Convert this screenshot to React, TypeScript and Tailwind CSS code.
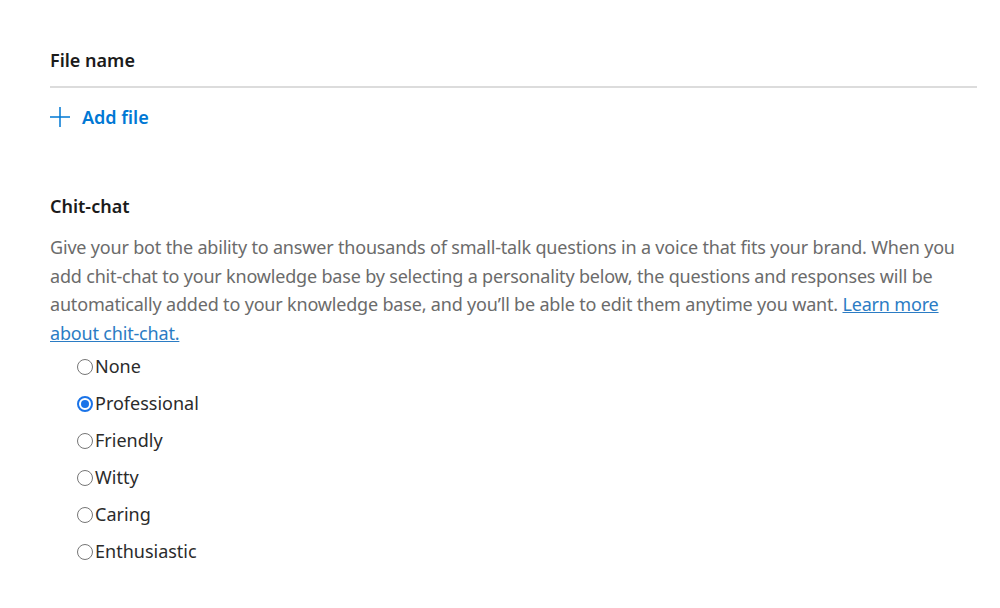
import { useState } from 'react';

const options = ['None', 'Professional', 'Friendly', 'Witty', 'Caring', 'Enthusiastic'];

export default function App() {
    const [selected, setSelected] = useState('Professional');

    return (
        <div className="min-h-screen bg-white font-['Noto_Sans',sans-serif] text-[#323130]">
            <div className="pl-[50px] pr-[23px] pt-[46px]">
                <h2 className="text-[18px] font-semibold leading-[28px] text-[#1b1b1b]">File name</h2>
                <div className="mt-[12px] h-[2px] bg-[#dcdcdc]" />
                <button className="mt-[15px] flex items-center gap-[12px] text-[#0078d4]">
                    <svg width="20" height="20" viewBox="0 0 20 20" fill="none" stroke="currentColor" strokeWidth="1.5">
                        <path d="M10 0v20M0 10h20" />
                    </svg>
                    <span className="text-[18px] font-semibold leading-[28px]">Add file</span>
                </button>

                <h2 className="mt-[61px] text-[18px] font-semibold leading-[28px] text-[#1b1b1b]">Chit-chat</h2>
                <p className="mt-[13px] text-[18px] leading-[28.5px] tracking-[-0.18px] text-[#6b6b6b]">
                    Give your bot the ability to answer thousands of small-talk questions in a voice that fits your brand. When you add chit-chat to your knowledge base by selecting a personality below, the questions and responses will be automatically added to your knowledge base, and you’ll be able to edit them anytime you want.{' '}
                    <a href="#" className="text-[#2b7cc4] underline">Learn more about chit-chat.</a>
                </p>

                <div className="mt-[1px] flex flex-col pl-[27px]">
                    {options.map((o) => {
                        const on = selected === o;
                        return (
                            <label key={o} onClick={() => setSelected(o)} className="flex h-[37px] cursor-pointer items-center text-[18px] text-[#2b2b2b]">
                                <span
                                    className={
                                        on
                                            ? 'flex h-[16px] w-[16px] items-center justify-center rounded-full border-[2px] border-[#1a73e8] bg-white'
                                            : 'flex h-[16px] w-[16px] items-center justify-center rounded-full border border-[#767676] bg-white'
                                    }
                                >
                                    {on && <span className="h-[8px] w-[8px] rounded-full bg-[#1a73e8]" />}
                                </span>
                                <span className="ml-[2px]">{o}</span>
                            </label>
                        );
                    })}
                </div>
            </div>
        </div>
    );
}
